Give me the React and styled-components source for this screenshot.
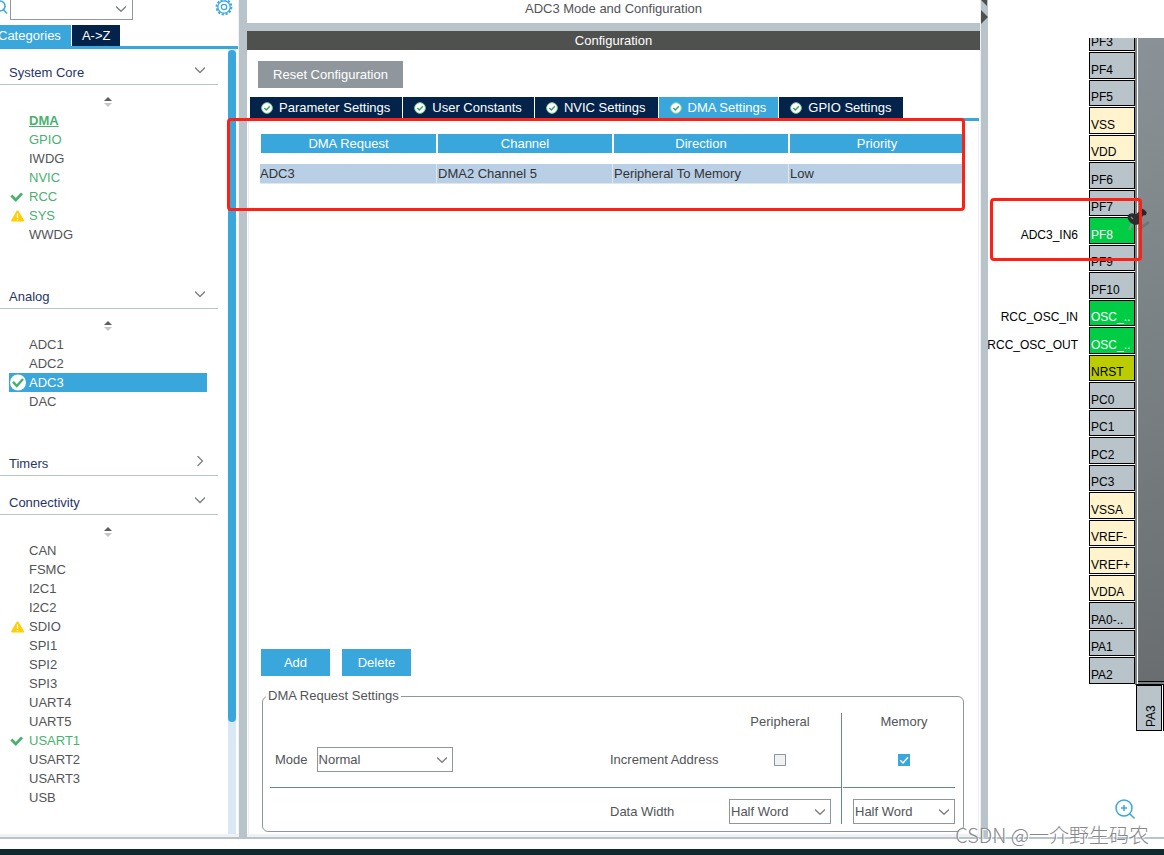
import React from "react";
import styled, { createGlobalStyle, css } from "styled-components";

const c = {
  blue: "#39a7dc",
  navy: "#03234b",
  steel: "#b8c4ca",
  grey: "#8f979d",
  text: "#525457",
  green: "#49b170",
  rule: "#6480ba",
  red: "#ff2015",
};

const GlobalStyle = createGlobalStyle`
  * { box-sizing: border-box; }
  body { margin: 0; background: #fff; }
  body, button, select, input {
    font: 13px/16px "Liberation Sans", Arial, "Noto Sans CJK SC", sans-serif;
    color: ${c.text};
  }
  button { border: 0; padding: 0; cursor: pointer; background: none; }
  svg { display: block; flex: none; }
`;

const Page = styled.div`
  position: relative;
  display: flex;
  flex-direction: column;
  min-height: 100vh;
`;

const Workspace = styled.main`
  flex: 1;
  display: grid;
  grid-template-columns: 239px 8px minmax(0, 1fr) 7px 176px;
  border-bottom: 2px solid ${c.steel};
`;

const Divider = styled.div`
  background: ${c.steel};
`;

const Footer = styled.footer`
  height: 16px;
  border-bottom: 6px solid #10292f;
`;

/* ---------- sidebar ---------- */

const Sidebar = styled.aside`
  display: flex;
  flex-direction: column;
  overflow: hidden;
  border-right: 1px solid #f0f1f2;
  border-bottom: 3px solid #f0f1f2;
`;

const SearchRow = styled.div`
  display: flex;
  height: 20px;
  margin-bottom: 5px;
  padding-right: 5px;
`;

const SearchIcon = styled.svg`
  margin-right: 2px;
`;

const SearchBox = styled.div`
  display: flex;
  align-items: center;
  width: 123px;
  padding: 0 6px 2px 0;
  border: 1px solid ${c.grey};
  border-top: 0;
`;

const SearchInput = styled.input`
  flex: 1;
  min-width: 0;
  height: 16px;
  border: 0;
  outline: 0;
  background: none;
`;

const GearButton = styled.button`
  margin-left: auto;
  height: 16px;
`;

const SideTabs = styled.div`
  display: flex;
  gap: 1px;
  margin-left: -12px;
  border-bottom: 3px solid ${c.blue};
`;

const SideTab = styled.button`
  height: 21px;
  padding: 0 10px;
  color: #fff;
  background: ${(p) => (p.$active ? c.blue : c.navy)};
`;

const SideScroll = styled.div`
  flex: 1;
  display: flex;
  justify-content: space-between;
  padding-right: 2px;
`;

const SideContent = styled.div`
  width: 218px;
`;

const ScrollTrack = styled.div`
  width: 8px;
  background: #d9e8f5;
`;

const ScrollThumb = styled.div`
  height: 672px;
  margin-top: 1px;
  border-radius: 4px;
  background: ${c.blue};
`;

const Section = styled.section`
  margin-bottom: 3px;
  &:last-child { margin-bottom: 0; }
`;

const SectionHead = styled.button`
  display: flex;
  align-items: flex-end;
  justify-content: space-between;
  width: 100%;
  height: 36px;
  padding: 0 12px 3px 9px;
  border-bottom: 1px solid ${c.steel};
  color: #1f3468;
`;

const ChevronSlot = styled.span`
  display: flex;
  align-items: center;
  justify-content: center;
  width: 12px;
  height: 22px;
`;

const SortHandle = styled.div`
  display: flex;
  justify-content: center;
  height: 26px;
  padding: 12px 3px 0 0;
`;

const PeripheralList = styled.ul`
  list-style: none;
  margin: 0;
  padding: 0 11px 26px 9px;
`;

const stateColor = { on: c.green, warn: c.green, current: c.green };

const PeripheralItem = styled.li`
  display: flex;
  align-items: center;
  height: 19px;
  color: ${(p) => (p.$active ? "#fff" : stateColor[p.$tone] || c.text)};
  background: ${(p) => (p.$active ? c.blue : "none")};
  ${(p) => p.$tone === "current" && css`font-weight: 700; text-decoration: underline;`}
`;

const IconSlot = styled.span`
  display: flex;
  width: 20px;
`;

/* ---------- centre ---------- */

const Center = styled.section`
  position: relative;
  display: flex;
  flex-direction: column;
  min-width: 0;
  border-right: 1px solid #f0f1f2;
  border-bottom: 3px solid #f0f1f2;
`;

const PanelTitle = styled.h1`
  margin: 0;
  height: 31px;
  border-bottom: 8px solid ${c.steel};
  font: inherit;
  line-height: 18px;
  text-align: center;
`;

const PanelBar = styled.h2`
  margin: 0 0 11px;
  height: 19px;
  font: inherit;
  line-height: 19px;
  text-align: center;
  color: #fff;
  background: #4f514f;
`;

const ResetButton = styled.button`
  align-self: flex-start;
  width: 145px;
  height: 27px;
  margin: 0 0 9px 11px;
  color: #fff;
  background: ${c.grey};
`;

const TabStrip = styled.div`
  display: flex;
  gap: 1px;
  margin: 0 1px;
  padding-left: 2px;
  border-bottom: 3px solid ${c.blue};
`;

const SettingsTab = styled.button`
  display: flex;
  align-items: center;
  gap: 6px;
  height: 21px;
  padding: 0 12px 0 11px;
  color: #fff;
  white-space: nowrap;
  background: ${(p) => (p.$active ? c.blue : c.navy)};
`;

const TabBody = styled.div`
  flex: 1;
  display: flex;
  flex-direction: column;
  margin: 0 1px;
  padding: 13px 14px 2px 11px;
  border-left: 1px solid #eceef0;
  border-right: 1px solid #eceef0;
`;

const RequestTable = styled.table`
  width: 100%;
  table-layout: fixed;
  border-spacing: 0;
  th {
    height: 30px;
    padding: 0;
    font-weight: 400;
    color: #fff;
    background: ${c.blue};
    border-left: 2px solid #fff;
    border-bottom: 11px solid #fff;
  }
  th:first-child { border-left-width: 1px; }
  td {
    height: 20px;
    padding: 0 0 0 1px;
    color: #333;
    background: #b8cfe6;
    border-left: 1px solid #e3e6e8;
    border-bottom: 1px solid #e3e6e8;
  }
  td:first-child { padding: 0; border-left: 0; }
`;

const Actions = styled.div`
  display: flex;
  gap: 12px;
  margin: auto 0 12px 1px;
`;

const ActionButton = styled.button`
  width: 69px;
  height: 27px;
  color: #fff;
  background: ${c.blue};
`;

const SettingsBox = styled.fieldset`
  display: flex;
  margin: 0 0 0 2px;
  padding: 9px 8px 7px 7px;
  border: 1px solid ${c.grey};
  border-radius: 6px;
  legend {
    margin-left: -4px;
    padding: 0 2px;
  }
`;

const PeripheralHalf = styled.div`
  flex: 1;
  padding-right: 10px;
  display: grid;
  grid-template-columns: minmax(0, 1fr) 119px 102px;
  grid-template-rows: 18px 57px 36px;
  align-items: center;
  border-right: 1px solid ${c.rule};
  background: linear-gradient(${c.rule}, ${c.rule}) 0 74px / 100% 1px no-repeat;
`;

const MemoryHalf = styled.div`
  margin-left: 1px;
  padding-left: 10px;
  display: grid;
  grid-template-columns: 102px;
  grid-template-rows: 18px 57px 36px;
  align-items: center;
  background: linear-gradient(${c.rule}, ${c.rule}) 0 74px / 100% 1px no-repeat;
`;

const ColumnHead = styled.span`
  text-align: center;
  line-height: 18px;
  grid-column: ${(p) => p.$column || 1};
`;

const ModeField = styled.label`
  display: flex;
  align-items: center;
  gap: 9px;
  padding-left: 5px;
`;

const FieldLabel = styled.label`
  grid-column: 2;
  ${(p) => p.$low && css`align-self: end; line-height: 25px;`}
`;

const SelectWrap = styled.span`
  position: relative;
  display: block;
  align-self: end;
  width: ${(p) => p.$width}px;
  svg { position: absolute; right: 6px; top: 10px; pointer-events: none; }
`;

const Select = styled.select`
  display: block;
  appearance: none;
  width: 100%;
  height: 25px;
  padding: 0 20px 0 1px;
  border: 1px solid ${c.grey};
  border-radius: 0;
  background: #fff;
`;

const CheckWrap = styled.span`
  position: relative;
  display: block;
  justify-self: center;
  width: 12px;
  height: 12px;
  svg { position: absolute; inset: 0; pointer-events: none; }
`;

const Checkbox = styled.input`
  display: block;
  appearance: none;
  width: 12px;
  height: 12px;
  margin: 0;
  border: 1px solid ${c.grey};
  background: #f0f1f2;
  &:checked { background: ${c.blue}; border-color: ${c.blue}; }
`;

/* ---------- pinout ---------- */

const Pinout = styled.section`
  position: relative;
  overflow: hidden;
  padding-top: 38px;
`;

const ChipRow = styled.div`
  display: flex;
`;

const PinList = styled.ol`
  list-style: none;
  margin: 0;
  padding: 0;
  width: 147px;
`;

const pinFill = { io: c.steel, power: "#fff4cd", used: "#00cc44", reset: "#bbcc00" };

const Pin = styled.li`
  display: flex;
  justify-content: flex-end;
  align-items: flex-end;
  height: 26px;
  margin-bottom: 1px;
  font-size: 12px;
  line-height: 14px;
  color: #000;
  &:nth-child(even) { height: 27px; }
  &:first-child { height: 13px; overflow: hidden; }
  &:first-child > span { border-top: 0; }
`;

const PinSignal = styled.span`
  padding: 0 11px 2px 0;
  white-space: nowrap;
`;

const PinPad = styled.span`
  flex: none;
  display: flex;
  align-items: flex-end;
  width: 46px;
  height: 100%;
  padding: 0 0 1px 1px;
  border: 1px solid #000;
  color: ${(p) => (p.$kind === "used" ? "#fff" : "#000")};
  background: ${(p) => pinFill[p.$kind]};
`;

const ChipBody = styled.div`
  flex: 1;
  border-left: 2px solid #7b8285;
  border-bottom: 1px solid #000;
  box-shadow: inset 1px 0 0 #fff, inset 0 -2px 0 #7b8285, inset 0 -3px 0 #000;
  background: linear-gradient(160deg, #8a9297, #7b8285 45%, #696d6f);
`;

const BottomPins = styled.div`
  display: flex;
  gap: 1px;
  padding-left: 148px;
`;

const BottomPin = styled.span`
  flex: none;
  display: flex;
  align-items: flex-end;
  width: 26px;
  height: 46px;
  padding: 3px;
  border: 1px solid #000;
  color: #000;
  font-size: 12px;
  line-height: 14px;
  writing-mode: vertical-rl;
  transform: rotate(180deg);
  background: ${c.steel};
`;

const ZoomButton = styled.button`
  position: absolute;
  right: 27px;
  bottom: 16px;
`;

const PushPin = styled.svg`
  position: absolute;
  left: 138px;
  top: 206px;
`;

/* ---------- overlays ---------- */

const Highlight = styled.div`
  position: absolute;
  pointer-events: none;
  border: 3px solid ${c.red};
  border-radius: 4px;
`;

const TableHighlight = styled(Highlight)`
  top: 118px;
  left: -20px;
  right: 15px;
  height: 93px;
  z-index: 1;
`;

const PinHighlight = styled(Highlight)`
  top: 198px;
  left: 2px;
  width: 152px;
  height: 63px;
`;

const Watermark = styled.div`
  position: absolute;
  right: 15px;
  bottom: 6px;
  z-index: 2;
  font: 20px/28px "Noto Sans CJK SC", sans-serif;
  font-weight: 300;
  color: #85878a;
  text-shadow: 1px 1px 0 #fff;
  pointer-events: none;
`;

const Chevron = ({ right }) => (
  <svg width="10" height="10" viewBox="0 0 10 10" fill="none" stroke="#7c8084" strokeWidth="1.3">
    <path d={right ? "M2.5 0 7.5 5 2.5 10" : "M0 2.5 5 7.5 10 2.5"} />
  </svg>
);

const DropChevron = () => (
  <svg width="10" height="6" viewBox="0 0 10 6" fill="none" stroke="#7c8084" strokeWidth="1.3">
    <path d="M0 .5 5 5.3 10 .5" />
  </svg>
);

const SortArrows = () => (
  <svg width="8" height="10" viewBox="0 0 8 10">
    <path d="M4 0 8 4H0z" fill="#5c5e60" />
    <path d="M0 6h8L4 10z" fill="#c4c6c8" />
  </svg>
);

const StateIcon = ({ tone, active }) => {
  if (active)
    return (
      <svg width="18" height="17" viewBox="0 0 18 17">
        <circle cx="9" cy="8.5" r="8" fill="#fff" />
        <path d="M4 7.8 7.8 12 14 5" fill="none" stroke={c.green} strokeWidth="2.5" />
      </svg>
    );
  if (tone === "on")
    return (
      <svg width="15" height="12" viewBox="0 0 15 12">
        <path d="M2.3 4.6 6.8 9 13 2.4" fill="none" stroke={c.green} strokeWidth="2.8" />
      </svg>
    );
  if (tone === "warn")
    return (
      <svg width="16" height="12" viewBox="0 0 16 12">
        <path d="M8.5.5Q9.2.5 9.7 1.3L15 10.2Q15.4 11.5 14 11.5H3.2Q1.600 11.5 2.2 10.2L7.4 1.3Q7.8.5 8.5.5z" fill="#ffd000" />
        <path d="M8.5 3.5v4.5M8.5 9v1.3" stroke="#fff" strokeWidth="1.2" />
      </svg>
    );
  return null;
};

const TabCheck = () => (
  <svg width="12" height="12" viewBox="0 0 12 12">
    <circle cx="6" cy="6" r="5.3" fill="#fff" stroke="#8fd3a6" strokeWidth="1" />
    <path d="M3.3 6 5.3 8 8.8 4.3" fill="none" stroke="#35a35c" strokeWidth="1.4" />
  </svg>
);

const Gear = () => (
  <svg width="18" height="16" viewBox="0 1 18 16" fill="none" stroke={c.blue}>
    <circle cx="9" cy="8" r="6.2" strokeWidth="1.3" />
    <circle cx="9" cy="8" r="7.5" strokeWidth="1.8" strokeDasharray="2.3 1.627" />
    <circle cx="9" cy="8" r="2.7" strokeWidth="1.2" />
  </svg>
);

const sections = [
  {
    name: "System Core",
    items: [["DMA", "current"], ["GPIO", "on", true], ["IWDG"], ["NVIC", "on", true], ["RCC", "on"], ["SYS", "warn"], ["WWDG"]],
  },
  { name: "Analog", items: [["ADC1"], ["ADC2"], ["ADC3", "active"], ["DAC"]] },
  { name: "Timers" },
  {
    name: "Connectivity",
    items: [["CAN"], ["FSMC"], ["I2C1"], ["I2C2"], ["SDIO", "alert"], ["SPI1"], ["SPI2"], ["SPI3"], ["UART4"], ["UART5"], ["USART1", "on"], ["USART2"], ["USART3"], ["USB"]],
  },
];

const tabs = ["Parameter Settings", "User Constants", "NVIC Settings", "DMA Settings", "GPIO Settings"];

const pins = [
  ["PF3", "io"], ["PF4", "io"], ["PF5", "io"], ["VSS", "power"], ["VDD", "power"], ["PF6", "io"], ["PF7", "io"],
  ["PF8", "used", "ADC3_IN6"], ["PF9", "io"], ["PF10", "io"], ["OSC_..", "used", "RCC_OSC_IN"],
  ["OSC_..", "used", "RCC_OSC_OUT"], ["NRST", "reset"], ["PC0", "io"], ["PC1", "io"], ["PC2", "io"], ["PC3", "io"],
  ["VSSA", "power"], ["VREF-", "power"], ["VREF+", "power"], ["VDDA", "power"], ["PA0-..", "io"], ["PA1", "io"], ["PA2", "io"],
];

const Dropdown = ({ id, label, width, value, options }) => (
  <SelectWrap $width={width}>
    <Select id={id} aria-label={label} defaultValue={value}>
      {options.map((o) => <option key={o}>{o}</option>)}
    </Select>
    <DropChevron />
  </SelectWrap>
);

const widths = ["Byte", "Half Word", "Word"];

export default function App() {
  return (
    <Page>
      <GlobalStyle />
      <Workspace>
        <Sidebar>
          <SearchRow>
            <SearchIcon width="8" height="16" viewBox="0 0 8 16" fill="none" stroke={c.blue} strokeWidth="1.6">
              <circle cx="0" cy="6" r="5" />
              <path d="M3.5 9.8 7 13.5" />
            </SearchIcon>
            <SearchBox>
              <SearchInput aria-label="Search peripherals" />
              <DropChevron />
            </SearchBox>
            <GearButton aria-label="Options"><Gear /></GearButton>
          </SearchRow>
          <SideTabs>
            <SideTab $active>Categories</SideTab>
            <SideTab>A-&gt;Z</SideTab>
          </SideTabs>
          <SideScroll>
            <SideContent>
              {sections.map((s) => (
                <Section key={s.name}>
                  <SectionHead>
                    {s.name}
                    <ChevronSlot><Chevron right={!s.items} /></ChevronSlot>
                  </SectionHead>
                  {s.items && (
                    <>
                      <SortHandle><SortArrows /></SortHandle>
                      <PeripheralList>
                        {s.items.map(([name, tone, plain]) => (
                          <PeripheralItem key={name} $tone={tone} $active={tone === "active"}>
                            <IconSlot>
                              {!plain && <StateIcon tone={tone === "alert" ? "warn" : tone} active={tone === "active"} />}
                            </IconSlot>
                            {name}
                          </PeripheralItem>
                        ))}
                      </PeripheralList>
                    </>
                  )}
                </Section>
              ))}
            </SideContent>
            <ScrollTrack><ScrollThumb /></ScrollTrack>
          </SideScroll>
        </Sidebar>

        <Divider />

        <Center>
          <PanelTitle>ADC3 Mode and Configuration</PanelTitle>
          <PanelBar>Configuration</PanelBar>
          <ResetButton>Reset Configuration</ResetButton>
          <TabStrip>
            {tabs.map((t) => (
              <SettingsTab key={t} $active={t === "DMA Settings"}><TabCheck />{t}</SettingsTab>
            ))}
          </TabStrip>
          <TabBody>
            <RequestTable>
              <thead>
                <tr><th>DMA Request</th><th>Channel</th><th>Direction</th><th>Priority</th></tr>
              </thead>
              <tbody>
                <tr><td>ADC3</td><td>DMA2 Channel 5</td><td>Peripheral To Memory</td><td>Low</td></tr>
              </tbody>
            </RequestTable>
            <Actions>
              <ActionButton>Add</ActionButton>
              <ActionButton>Delete</ActionButton>
            </Actions>
            <SettingsBox>
              <legend>DMA Request Settings</legend>
              <PeripheralHalf>
                <ColumnHead $column={3}>Peripheral</ColumnHead>
                <ModeField>
                  Mode
                  <Dropdown width={136} value="Normal" options={["Normal", "Circular"]} />
                </ModeField>
                <FieldLabel htmlFor="inc-peripheral">Increment Address</FieldLabel>
                <CheckWrap><Checkbox type="checkbox" id="inc-peripheral" /></CheckWrap>
                <FieldLabel htmlFor="width-peripheral" $low>Data Width</FieldLabel>
                <Dropdown id="width-peripheral" width={102} value="Half Word" options={widths} />
              </PeripheralHalf>
              <MemoryHalf>
                <ColumnHead>Memory</ColumnHead>
                <CheckWrap>
                  <Checkbox type="checkbox" defaultChecked aria-label="Increment memory address" />
                  <svg width="12" height="12" viewBox="0 0 12 12" fill="none" stroke="#fff" strokeWidth="1.5">
                    <path d="M2.3 6.3 5 9 10 3.3" />
                  </svg>
                </CheckWrap>
                <Dropdown label="Memory data width" width={102} value="Half Word" options={widths} />
              </MemoryHalf>
            </SettingsBox>
          </TabBody>
          <TableHighlight />
        </Center>

        <Divider>
          <svg width="7" height="24" viewBox="0 0 7 24" fill="#4f514f">
            <path d="M0 0H6V6z" />
            <path d="M0 10 7 17 0 24z" />
          </svg>
        </Divider>

        <Pinout>
          <ChipRow>
            <PinList>
              {pins.map(([name, kind, signal], i) => (
                <Pin key={i}>
                  {signal && <PinSignal>{signal}</PinSignal>}
                  <PinPad $kind={kind}>{name}</PinPad>
                </Pin>
              ))}
            </PinList>
            <ChipBody />
          </ChipRow>
          <BottomPins>
            <BottomPin>PA3</BottomPin>
            <BottomPin />
          </BottomPins>
          <PushPin width="24" height="26" viewBox="0 0 24 26">
            <path d="M11 23 22 15 24 17 14 24z" fill="#555a5d" opacity=".4" />
            <path d="M7.5 15 3 24" stroke="#8d9499" strokeWidth="2" />
            <path d="M10 12 17 6" stroke="#333" strokeWidth="6" />
            <ellipse cx="8" cy="13" rx="7" ry="5" transform="rotate(38 8 13)" fill="#2b2d2e" />
            <ellipse cx="17" cy="6" rx="4" ry="2.5" transform="rotate(38 17 6)" fill="#26282a" />
            <path d="M5 11 7 13" stroke="#7d8286" strokeWidth="1.5" />
          </PushPin>
          <PinHighlight />
          <ZoomButton aria-label="Zoom in">
            <svg width="24" height="24" viewBox="0 0 24 24" fill="none" stroke={c.blue} strokeWidth="1.5">
              <circle cx="11" cy="11" r="8" />
              <path d="M16.7 16.7 21.5 21.5M8 11h6M11 8v6" />
            </svg>
          </ZoomButton>
        </Pinout>
      </Workspace>
      <Footer />
      <Watermark>CSDN @一介野生码农</Watermark>
    </Page>
  );
}
